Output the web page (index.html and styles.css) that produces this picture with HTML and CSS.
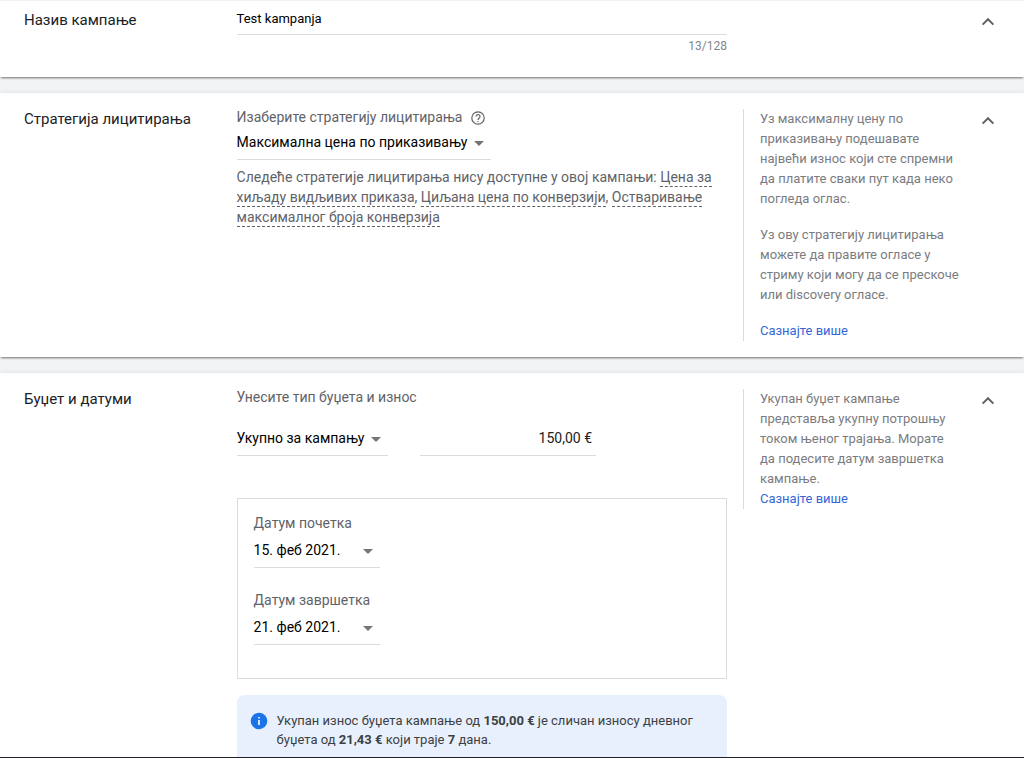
FILE: index.html
```html
<!DOCTYPE html>
<html lang="sr">
<head>
<meta charset="utf-8">
<title>Test kampanja</title>
<link rel="stylesheet" href="styles.css">
</head>
<body>
<main class="page">
  <section class="panel panel-name">
    <h2 class="title">Назив кампање</h2>
    <div class="content">
      <div class="name-field">Test kampanja</div>
      <div class="counter">13/128</div>
    </div>
    <svg class="chevron" viewBox="0 0 14 10"><path d="M1.6 7.6 L7 2.2 L12.4 7.6"/></svg>
  </section>

  <section class="panel panel-bid">
    <h2 class="title">Стратегија лицитирања</h2>
    <div class="content">
      <div class="label">Изаберите стратегију лицитирања
        <svg class="help-icon" viewBox="0 0 14 14"><circle cx="7" cy="7" r="6.2"/><path d="M5 5.6a2 2 0 1 1 3.3 1.5C7.5 7.7 7 8 7 8.9"/><path d="M7 9.9v1.2"/></svg>
      </div>
      <div class="select select-bid">Максимална цена по приказивању<i class="arrow"></i></div>
      <p class="unavailable">Следеће стратегије лицитирања нису доступне у овој кампањи: <span class="term">Цена за<br>хиљаду видљивих приказа</span>, <span class="term">Циљана цена по конверзији</span>, <span class="term">Остваривање<br>максималног броја конверзија</span></p>
    </div>
    <aside class="help">
      <p>Уз максималну цену по<br>приказивању подешавате<br>највећи износ који сте спремни<br>да платите сваки пут када неко<br>погледа оглас.</p>
      <p>Уз ову стратегију лицитирања<br>можете да правите огласе у<br>стриму који могу да се прескоче<br>или discovery огласе.</p>
      <a class="link">Сазнајте више</a>
    </aside>
    <svg class="chevron" viewBox="0 0 14 10"><path d="M1.6 7.6 L7 2.2 L12.4 7.6"/></svg>
  </section>

  <section class="panel panel-budget">
    <h2 class="title">Буџет и датуми</h2>
    <div class="content">
      <div class="label">Унесите тип буџета и износ</div>
      <div class="budget-row">
        <div class="select select-type">Укупно за кампању<i class="arrow"></i></div>
        <div class="amount">150,00 €</div>
      </div>
      <div class="dates">
        <div class="label">Датум почетка</div>
        <div class="select select-date">15. феб 2021.<i class="arrow"></i></div>
        <div class="label label-end">Датум завршетка</div>
        <div class="select select-date">21. феб 2021.<i class="arrow"></i></div>
      </div>
      <div class="notice">
        <svg class="info-icon" viewBox="0 0 18 18"><circle cx="9" cy="9" r="8.3"/><path d="M8.2 5h1.6v1.6H8.2zM8.2 8h1.6v5H8.2z"/></svg>
        <p>Укупан износ буџета кампање од <b>150,00 €</b> је сличан износу дневног<br>буџета од <b>21,43 €</b> који траје <b>7</b> дана.</p>
      </div>
    </div>
    <aside class="help">
      <div>Укупан буџет кампање<br>представља укупну потрошњу<br>током њеног трајања. Морате<br>да подесите датум завршетка<br>кампање.</div>
      <a class="link">Сазнајте више</a>
    </aside>
    <svg class="chevron" viewBox="0 0 14 10"><path d="M1.6 7.6 L7 2.2 L12.4 7.6"/></svg>
  </section>
</main>
</body>
</html>
```
FILE: styles.css
```css
* { box-sizing: border-box; }
body {
  margin: 0;
  font-family: Roboto, "Liberation Sans", sans-serif;
  font-size: 14px;
  line-height: 20px;
  color: #5f6368;
  background: #f1f3f4;
}
p { margin: 0; }
.page {
  height: 758px;
  overflow: hidden;
  display: flex;
  flex-direction: column;
  gap: 16px;
  border-top: 1px solid #f1f1f1;
  border-bottom: 1px solid #202124;
}
.panel {
  display: flex;
  flex: none;
  align-items: flex-start;
  padding: 16px 29px 0 24px;
  background: #fff;
  box-shadow: 0 2px 2px -1px rgba(0, 0, 0, .5), 0 0 4px rgba(0, 0, 0, .1);
}
.panel-name { height: 76px; padding-top: 9px; }
.panel-bid { height: 264px; }
.panel-budget { height: 600px; }
.title {
  flex: none;
  width: 212.6px;
  margin: 0;
  font-size: 15px;
  font-weight: 400;
  line-height: 20px;
  color: #202124;
}
.content { width: 490.4px; flex: none; }
.name-field {
  height: 25px;
  border-bottom: 1px solid #dadce0;
  font-size: 13px;
  line-height: 17px;
  color: #000;
}
.counter {
  font-size: 12px;
  line-height: 22px;
  text-align: right;
  color: #80868b;
}
.chevron {
  width: 14px;
  height: 10px;
  margin: 7px 0 0 auto;
  fill: none;
  stroke: #5f6368;
  stroke-width: 2;
}
.label {
  display: flex;
  align-items: center;
  height: 16px;
  margin-bottom: 1px;
  line-height: 16px;
}
.help-icon {
  width: 14px;
  height: 14px;
  margin: 2px 0 0 9px;
  fill: none;
  stroke: #5f6368;
  stroke-width: 1.2;
}
.select {
  display: flex;
  align-items: center;
  justify-content: space-between;
  height: 34px;
  padding: 0 7px 1px 0;
  border-bottom: 1px solid #dadce0;
  color: #000;
}
.arrow {
  margin-top: 2px;
  border: 5px solid transparent;
  border-top-color: #757575;
  border-bottom: 0;
}
.select-bid { width: 254px; margin-bottom: 7px; }
.term {
  padding-bottom: 1px;
  border-bottom: 1px dashed #5f6368;
}
.help {
  width: 220px;
  margin-left: 16px;
  padding-left: 16px;
  border-left: 1px solid #dadce0;
  font-size: 13px;
  color: #7a7c7f;
}
.help p { margin-bottom: 16px; }
.link { display: block; color: #3367d6; }
.budget-row { display: flex; gap: 32px; margin-top: 17px; }
.select-type { width: 151px; }
.amount {
  width: 176px;
  height: 34px;
  padding-right: 3.6px;
  border-bottom: 1px solid #dadce0;
  line-height: 33px;
  text-align: right;
  color: #202124;
}
.dates {
  height: 181px;
  margin-top: 42px;
  padding: 16px;
  border: 1px solid #dadce0;
}
.dates .label { margin-bottom: 3px; }
.select-date { width: 126px; }
.label-end { margin-top: 24px; }
.notice {
  display: flex;
  height: 90px;
  margin-top: 16px;
  padding: 16px 13px;
  border-radius: 8px;
  background: #e8f0fe;
  font-size: 13px;
  line-height: 19px;
  color: #3c4043;
}
.info-icon { flex: none; width: 18px; height: 18px; margin: 1px 9px 0 0; }
.info-icon circle { fill: #1a73e8; }
.info-icon path { fill: #fff; }
b { font-weight: 700; }
```
